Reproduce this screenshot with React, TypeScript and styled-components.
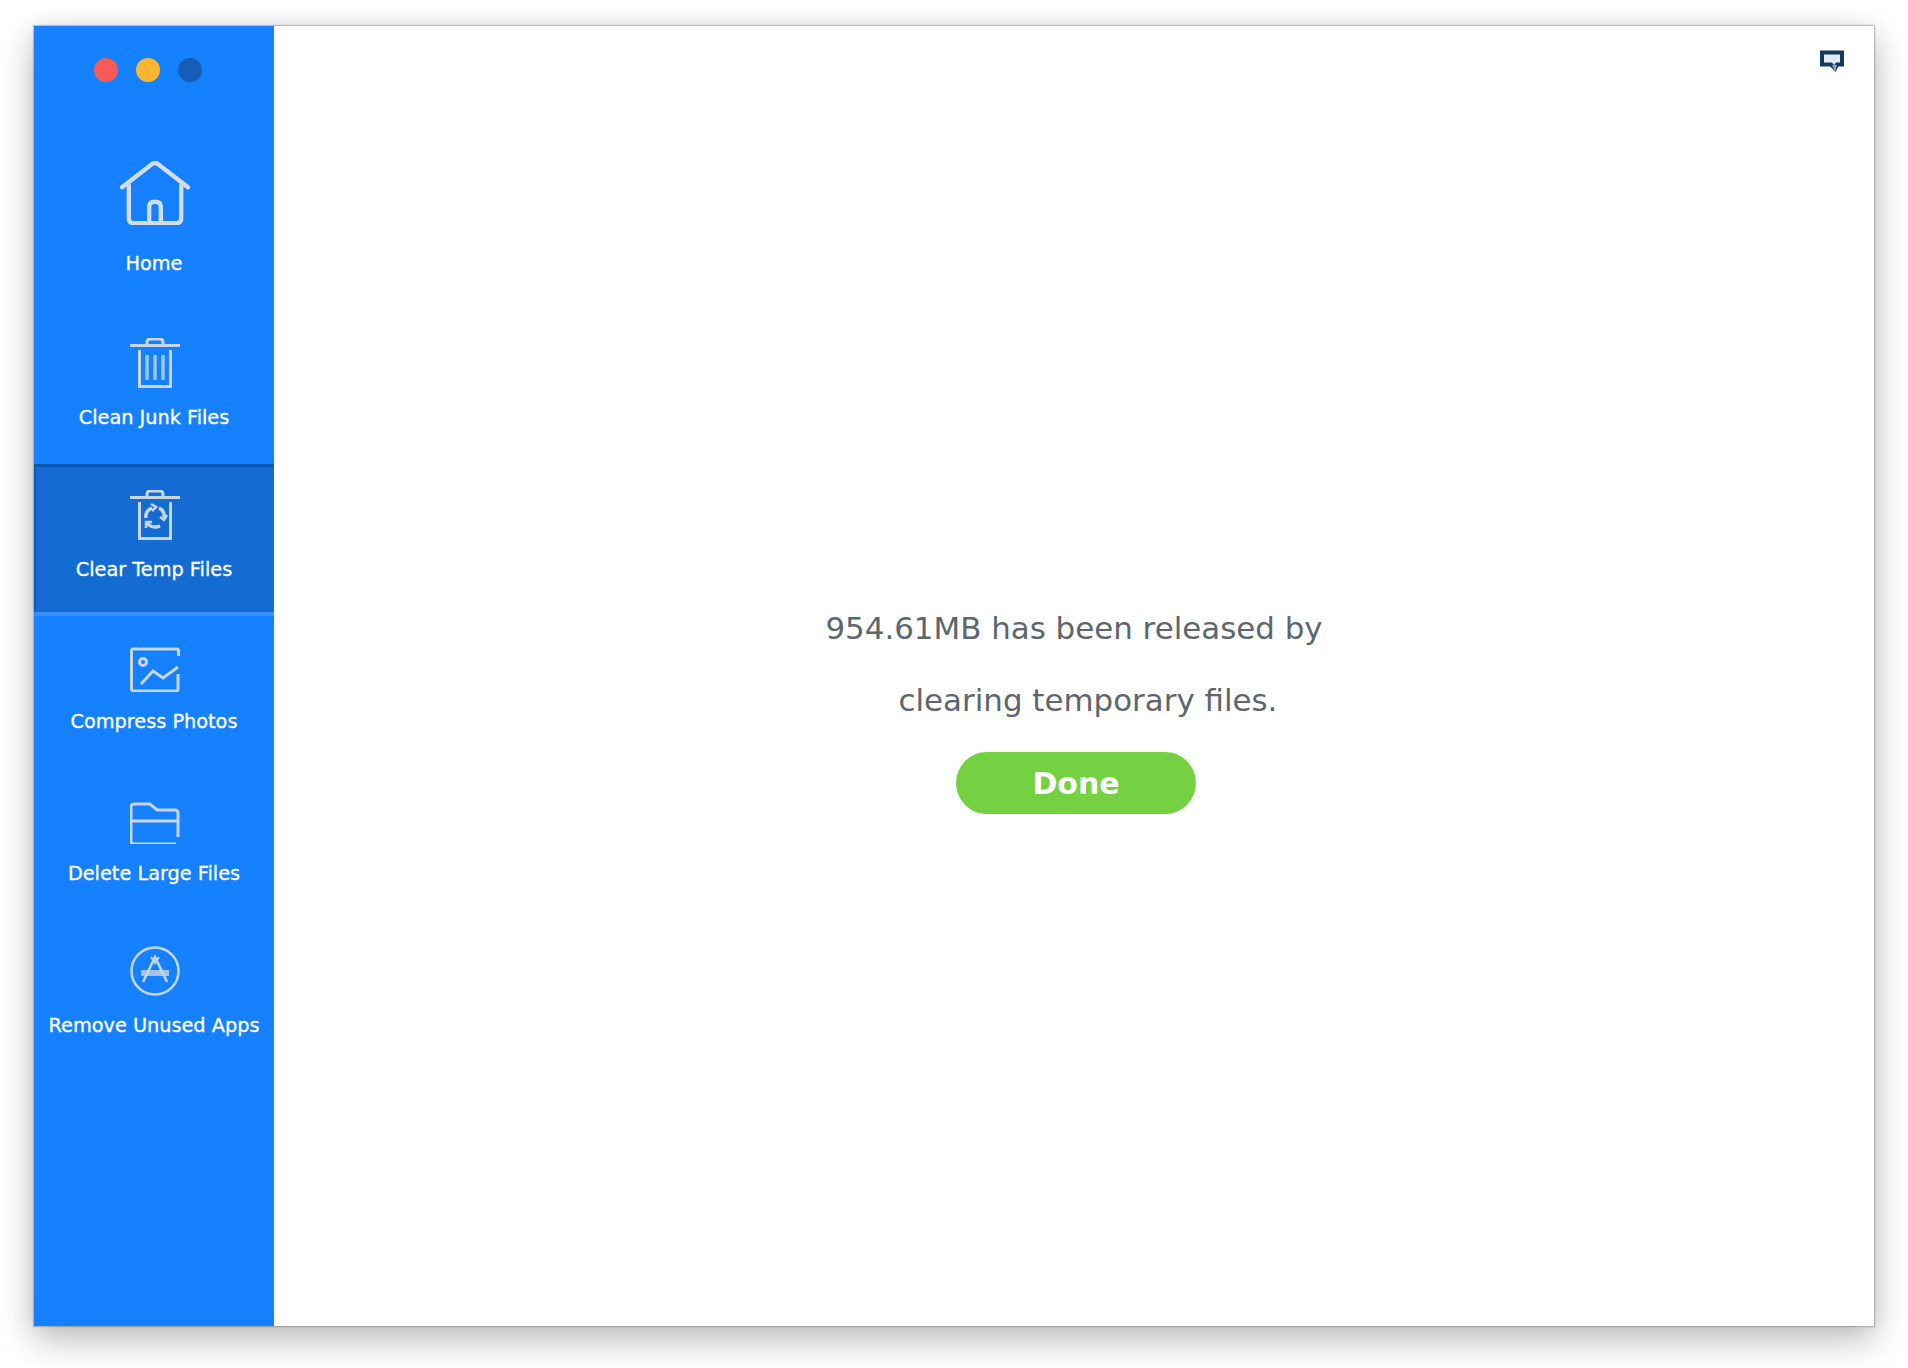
import React from 'react';
import styled, { createGlobalStyle } from 'styled-components';

const GlobalStyle = createGlobalStyle`
  html, body {
    margin: 0;
    padding: 0;
    background: #ffffff;
  }
  body {
    font-family: "DejaVu Sans", "Liberation Sans", sans-serif;
  }
`;

const Page = styled.div`
  width: 1908px;
  height: 1368px;
  padding: 26px 34px 42px 34px;
  box-sizing: border-box;
  overflow: hidden;
`;

const Window = styled.div`
  display: flex;
  height: 100%;
  background: #fff;
  box-shadow: 0 0 1px 1px rgba(90, 90, 90, 0.32), 0 14px 34px rgba(0, 0, 0, 0.26), 0 0 18px rgba(0, 0, 0, 0.08);
`;

const Sidebar = styled.aside`
  width: 240px;
  flex: none;
  background: #1681fe;
`;

const TrafficLights = styled.div`
  display: flex;
  gap: 18px;
  height: 132px;
  padding: 32px 0 0 60px;
  box-sizing: border-box;
`;

const Light = styled.span<{ $color: string }>`
  width: 24px;
  height: 24px;
  border-radius: 50%;
  background: ${p => p.$color};
`;

const NavItem = styled.div<{ $active?: boolean; $tall?: boolean }>`
  height: ${p => (p.$tall ? 154 : 152)}px;
  box-sizing: border-box;
  display: flex;
  flex-direction: column;
  align-items: center;
  padding-top: ${p => (p.$tall ? 0 : 23)}px;
  background: ${p => (p.$active ? '#146cd2' : 'transparent')};
  border-top: 3px solid ${p => (p.$active ? '#0e56ae' : 'transparent')};
  border-bottom: 4px solid ${p => (p.$active ? '#3a8eff' : 'transparent')};
  box-shadow: ${p => (p.$active ? 'inset 2px 0 0 #0f5cb8' : 'none')};
`;

const IconSlot = styled.div<{ $tall?: boolean }>`
  height: ${p => (p.$tall ? 64 : 50)}px;
  display: flex;
  align-items: flex-start;
  justify-content: center;
  padding-left: 2px;
`;

const NavLabel = styled.div<{ $tall?: boolean }>`
  margin-top: ${p => (p.$tall ? 26 : 17)}px;
  font-size: 19.3px;
  line-height: 26px;
  color: #fff;
  white-space: nowrap;
  -webkit-text-stroke: 0.3px #fff;
`;

const Main = styled.main`
  flex: 1;
  display: flex;
  flex-direction: column;
  align-items: center;
`;

const TopBar = styled.div`
  align-self: stretch;
  display: flex;
  justify-content: flex-end;
  padding: 24px 30px 0 0;
  height: 46px;
  box-sizing: border-box;
`;

const Message = styled.div`
  margin-top: 520px;
  display: flex;
  flex-direction: column;
  align-items: center;
`;

const MessageLine = styled.div<{ $indent?: number }>`
  font-size: 30.9px;
  line-height: 72px;
  color: #5d666e;
  white-space: nowrap;
  margin-left: ${p => p.$indent ?? 0}px;
`;

const DoneButton = styled.button`
  margin: 16px 0 0 4px;
  width: 240px;
  height: 62px;
  border: none;
  border-radius: 31px;
  background: #74d142;
  color: #fff;
  font-family: inherit;
  font-size: 30px;
  font-weight: 700;
  cursor: pointer;
`;

const S = { fill: 'none', stroke: '#c5d5ea', strokeWidth: 3 };

const HomeIcon = () => (
  <svg width="70" height="64" viewBox="0 0 72 66" {...S} stroke="#d3dde9">
    <path d="M2 27 33 3q3-2 6 0l31 24" strokeLinecap="round" strokeWidth="4.500" />
    <path d="M9 24v35q0 5 5 5h44q5 0 5-5V24" strokeWidth="4.500" />
    <path d="M30 64V47q0-5 6-5t6 5v17" strokeWidth="4.500" />
  </svg>
);

const TrashIcon = () => (
  <svg width="50" height="50" viewBox="0 0 50 50" {...S}>
    <path d="M0 7.500h50" />
    <path d="M17 7V4q0-3 3-3h10q3 0 3 3v3" />
    <path d="M9.500 12v36.500h31V12" />
    <path d="M17 17v25M25 17v25M33 17v25" strokeWidth="3.500" opacity="0.8" />
  </svg>
);

const TempIcon = () => (
  <svg width="50" height="50" viewBox="0 0 50 50" {...S}>
    <path d="M0 7.500h50" />
    <path d="M17 7V4q0-3 3-3h10q3 0 3 3v3" />
    <path d="M9.500 12v36.500h31V12" />
    <path d="M16 28q-1-7 6-10" strokeWidth="3.500" />
    <path d="M21 14l5 3-4 4" strokeWidth="2.500" />
    <path d="M29 18q6 3 5 10" strokeWidth="3.500" />
    <path d="M37 25l-3 5-4-3" strokeWidth="2.500" />
    <path d="M30 36q-8 3-13-3" strokeWidth="3.500" />
    <path d="M16 38l0-6 6 0" strokeWidth="2.500" />
  </svg>
);

const PhotoIcon = () => (
  <svg width="50" height="50" viewBox="0 0 50 50" {...S}>
    <path d="M48.500 14V9q0-2-2-2H3q-1.500 0-1.500 2v38q0 2 2 2h43q1.500 0 1.500-2V32" />
    <circle cx="13" cy="20" r="3.500" />
    <path d="M11 42 23 29l10 7 15-11" />
  </svg>
);

const FolderIcon = () => (
  <svg width="50" height="50" viewBox="0 0 50 50" {...S}>
    <path d="M46 50H4q-3 0-3-3V13q0-3 3-3h16l7 6h18q3 0 3 3v24" />
    <path d="M1 27h47" />
  </svg>
);

const AppsIcon = () => (
  <svg width="50" height="50" viewBox="0 0 50 50" {...S}>
    <circle cx="25" cy="25" r="23.500" strokeWidth="2.500" />
    <path d="M13 36 25 11l12 25" strokeWidth="2.500" />
    <path d="M21 11l4 6 4-6" strokeWidth="2" />
    <path d="M11 27h28" strokeWidth="6" opacity="0.8" />
  </svg>
);

const ChatIcon = () => (
  <svg width="24" height="23" viewBox="0 0 24 23">
    <path d="M2 2.500h20v12h-5l-2 4-4-4H2z" fill="#e4eaf1" stroke="#15395f" strokeWidth="4" strokeLinejoin="miter" />
    <path d="M12 15h5l-2 7z" fill="#8fa3b8" />
  </svg>
);

const items: { label: string; icon: React.ReactNode; tall?: boolean; active?: boolean }[] = [
  { label: 'Home', icon: <HomeIcon />, tall: true },
  { label: 'Clean Junk Files', icon: <TrashIcon /> },
  { label: 'Clear Temp Files', icon: <TempIcon />, active: true },
  { label: 'Compress Photos', icon: <PhotoIcon /> },
  { label: 'Delete Large Files', icon: <FolderIcon /> },
  { label: 'Remove Unused Apps', icon: <AppsIcon /> },
];

export default function App() {
  return (
    <Page>
      <GlobalStyle />
      <Window>
        <Sidebar>
          <TrafficLights>
            <Light $color="#fb5a59" />
            <Light $color="#fdb631" />
            <Light $color="#155db5" />
          </TrafficLights>
          {items.map(item => (
            <NavItem key={item.label} $active={item.active} $tall={item.tall}>
              <IconSlot $tall={item.tall}>{item.icon}</IconSlot>
              <NavLabel $tall={item.tall}>{item.label}</NavLabel>
            </NavItem>
          ))}
        </Sidebar>
        <Main>
          <TopBar>
            <ChatIcon />
          </TopBar>
          <Message>
            <MessageLine>954.61MB has been released by</MessageLine>
            <MessageLine $indent={28}>clearing temporary files.</MessageLine>
            <DoneButton>Done</DoneButton>
          </Message>
        </Main>
      </Window>
    </Page>
  );
}
